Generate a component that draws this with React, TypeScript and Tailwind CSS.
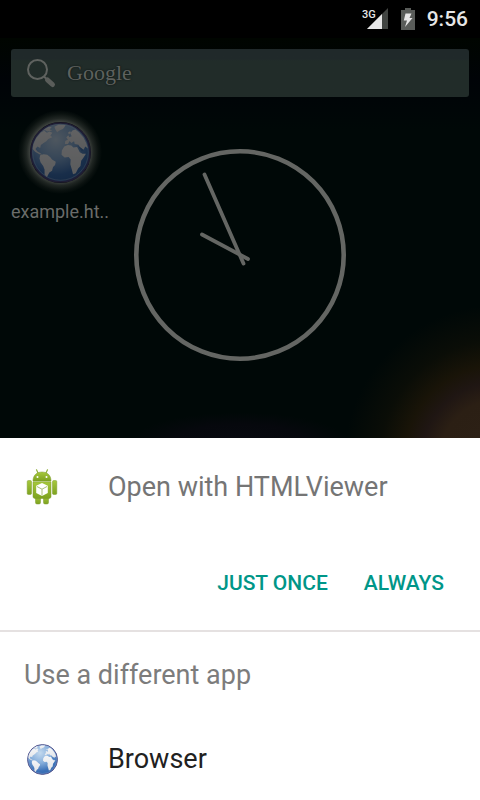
import React from "react";

function Globe({ id, className }: { id: string; className: string }) {
  return (
    <svg viewBox="0 0 180 180" className={className} aria-hidden="true">
      <defs>
        <radialGradient id={`${id}-sea`} cx="0.42" cy="0.28" r="0.75">
          <stop offset="0" stopColor="#c3d9ee" />
          <stop offset="0.45" stopColor="#86aedb" />
          <stop offset="0.8" stopColor="#3d72b8" />
          <stop offset="1" stopColor="#3467ac" />
        </radialGradient>
        <linearGradient id={`${id}-land`} x1="0" y1="0" x2="0" y2="1">
          <stop offset="0" stopColor="#f4f5f7" />
          <stop offset="1" stopColor="#e2e4e8" />
        </linearGradient>
      </defs>
      <circle cx="90" cy="90" r="87" fill={`url(#${id}-sea)`} stroke="#4e4a84" strokeWidth="5" />
      <circle cx="90" cy="90" r="82" fill="none" stroke="#b9cbe6" strokeWidth="2" opacity="0.6" />
      <g fill={`url(#${id}-land)`}>
        <path d="M10 66 L18 48 L32 31 L42 26 L50 32 L58 28 L66 32 L60 40 L66 45 L54 50 L48 57 L40 62 L32 68 L30 77 L22 72 L16 80 L22 87 L31 92 L37 97 L28 95 L15 88 L8 80Z" />
        <path d="M36 26 L54 15 L64 15 L58 22 L66 25 L51 28 L45 24Z" />
        <path d="M72 14 L84 8 L105 9 L101 16 L97 21 L87 25 L80 30 L75 22Z" />
        <path d="M30 98 L40 95 L51 97 L60 104 L65 111 L76 117 L74 127 L68 133 L65 144 L57 149 L50 162 L43 156 L43 140 L39 130 L31 119 L28 108Z" />
        <path d="M101 72 L112 68 L122 69 L128 75 L139 74 L147 89 L155 94 L165 94 L158 105 L151 114 L149 130 L142 137 L135 151 L127 154 L123 139 L119 125 L120 111 L114 103 L102 105 L93 97 L94 84Z" />
        <path d="M103 65 L104 56 L112 52 L107 46 L113 39 L116 45 L123 42 L119 34 L125 25 L134 22 L145 31 L158 46 L166 62 L171 78 L163 72 L158 82 L148 75 L143 67 L132 65 L130 57 L122 62 L117 56 L112 65Z" />
        <path d="M112 32 L118 27 L121 31 L115 37Z" />
      </g>
      <path d="M142 71 L150 76 L159 83 L153 88Z" fill="#4b7bbb" />
    </svg>
  );
}

function StatusBar() {
  return (
    <header className="flex h-[38px] items-center justify-end bg-black pr-3 text-[#e6e6e6]">
      <svg viewBox="0 0 27 24" className="h-6 w-[27px]" role="img" aria-label="3G signal">
        <path d="M5 22 L26 1 V22Z" fill="#424542" />
        <path d="M5 22 L20 7 V22Z" fill="#e6e6e6" />
        <text x="0" y="11" fontFamily="Roboto, sans-serif" fontWeight="500" fontSize="11" fill="#e6e6e6">3G</text>
      </svg>
      <svg viewBox="0 0 14 22" className="ml-3 h-[22px] w-[14px]" role="img" aria-label="Battery charging">
        <path d="M4 0 H10 V2 H14 V22 H0 V2 H4Z" fill="#595c59" />
        <path d="M4.500 5.500 H10.500 L8.500 10 H11.500 L4 19 L6 12.500 H2.800Z" fill="#e6e6e6" />
      </svg>
      <time className="ml-3 text-[21px] leading-6 font-medium">9:56</time>
    </header>
  );
}

function SearchBar() {
  return (
    <button
      type="button"
      aria-label="Google search"
      className="flex h-12 w-full items-center rounded-[3px] bg-linear-to-b from-[#20292a] from-20% to-[#212c29] to-25% pl-[14px]"
    >
      <svg viewBox="0 0 32 32" className="size-8" aria-hidden="true">
        <circle cx="12.500" cy="12.500" r="9.500" fill="none" stroke="#5f625f" strokeWidth="2" />
        <path d="M19 19.500 L22 22.500" stroke="#5f625f" strokeWidth="2" />
        <path d="M22.500 23 L27.500 27.500" stroke="#5a5d5a" strokeWidth="5" strokeLinecap="round" />
      </svg>
      <span className="ml-[10px] font-['Liberation_Serif',serif] text-[22px] leading-7 text-[#5e615e] [text-shadow:0_0_2px_#0a0f0d]">
        Google
      </span>
    </button>
  );
}

function Clock() {
  return (
    <svg viewBox="0 0 212 212" className="size-[212px]" role="img" aria-label="Clock, 9:56">
      <g fill="none" stroke="#646663" strokeLinecap="round">
        <circle cx="106" cy="106" r="103.700" strokeWidth="4.600" />
        <path d="M70.500 25.500 L109.500 114.500" strokeWidth="3.800" />
        <path d="M68 85.500 L114 110" strokeWidth="3.800" />
      </g>
    </svg>
  );
}

function HomeScreen() {
  return (
    <section className="h-[438px] overflow-hidden bg-[radial-gradient(circle_at_104%_105%,#2d2116_0,#2b1f14_60px,#1f1613_78px,#191408_95px,#0a0d07_120px,transparent_155px),radial-gradient(ellipse_110px_30px_at_50%_101%,#080a10_0,#06080d_60%,#00080600_100%),linear-gradient(#000500_38px,#000307_80px,#000807_130px)] bg-no-repeat">
      <StatusBar />
      <div className="px-[11px] pt-[11px]">
        <SearchBar />
        <div className="grid grid-cols-[98px_1fr_98px] pt-[13px]">
          <button type="button" className="flex flex-col items-center self-start">
            <span className="flex size-[84px] items-center justify-center rounded-full bg-[radial-gradient(closest-side,#3c413d_0,#3c413d_72%,#202623_80%,#0b1210_91%,transparent_100%)]">
              <span className="flex rounded-full bg-black">
                <Globe id="shortcut" className="size-[61px] opacity-40" />
              </span>
            </span>
            <span className="mt-1.5 text-[18px] leading-6 whitespace-nowrap text-[#6a6c6a]">example.ht..</span>
          </button>
          <div className="flex justify-center pt-[39px]">
            <Clock />
          </div>
        </div>
      </div>
    </section>
  );
}

function HtmlViewerIcon() {
  return (
    <svg viewBox="0 0 36 36" className="size-9" aria-hidden="true">
      <defs>
        <linearGradient id="robot" x1="0" y1="0" x2="0" y2="1">
          <stop offset="0" stopColor="#a6c83c" />
          <stop offset="1" stopColor="#7da21f" />
        </linearGradient>
      </defs>
      <path d="M12.500 0.800 L14.500 5 M23.500 0.800 L21.500 5" stroke="#8fae3a" strokeWidth="1.200" strokeLinecap="round" />
      <g fill="url(#robot)" stroke="#7c9a2c" strokeWidth="0.500">
        <path d="M9 12 C9 6 13 3 18 3 S27 6 27 12Z" />
        <rect x="3.200" y="11.500" width="4.300" height="14" rx="1.200" />
        <rect x="28.500" y="11.500" width="4.300" height="14" rx="1.200" />
        <rect x="11.500" y="26" width="5" height="9" rx="1.500" />
        <rect x="19.500" y="26" width="5" height="9" rx="1.500" />
        <path d="M9 12.800 H27 V27.500 Q27 29.500 25 29.500 H11 Q9 29.500 9 27.500Z" />
      </g>
      <circle cx="13.500" cy="8" r="1" fill="#fff" />
      <circle cx="22.500" cy="8" r="1" fill="#fff" />
      <path d="M18 14 L23.800 16.800 V24 L18 27 L12.200 24 V16.800Z" fill="#fff" />
      <path d="M13 17.500 L18 20.200 L23 17.500 M18 20.200 V26.500" fill="none" stroke="#9fb76a" strokeWidth="0.900" />
    </svg>
  );
}

const actionClass =
  "h-[54px] px-3 text-[21px] leading-6 font-medium text-[#009688]";

export default function App() {
  return (
    <main className="min-h-screen bg-white font-[Roboto,sans-serif]">
      <HomeScreen />
      <section aria-label="Open with">
        <div className="flex h-[98px] items-center px-6">
          <HtmlViewerIcon />
          <h1 className="ml-12 text-[27px] leading-8 text-[#757575]">Open with HTMLViewer</h1>
        </div>
        <div className="flex h-24 items-start justify-end gap-3 border-b-2 border-[#e5e1e1] px-6 pt-5">
          <button type="button" className={actionClass}>JUST ONCE</button>
          <button type="button" className={actionClass}>ALWAYS</button>
        </div>
        <h2 className="flex h-[86px] items-center px-6 text-[27px] leading-8 text-[#7c7c7c]">Use a different app</h2>
        <button type="button" className="flex h-[82px] w-full items-center px-6 text-left">
          <span className="flex size-9 items-center justify-center">
            <Globe id="browser" className="size-[31px]" />
          </span>
          <span className="ml-12 text-[27px] leading-8 text-[#212121]">Browser</span>
        </button>
      </section>
    </main>
  );
}
